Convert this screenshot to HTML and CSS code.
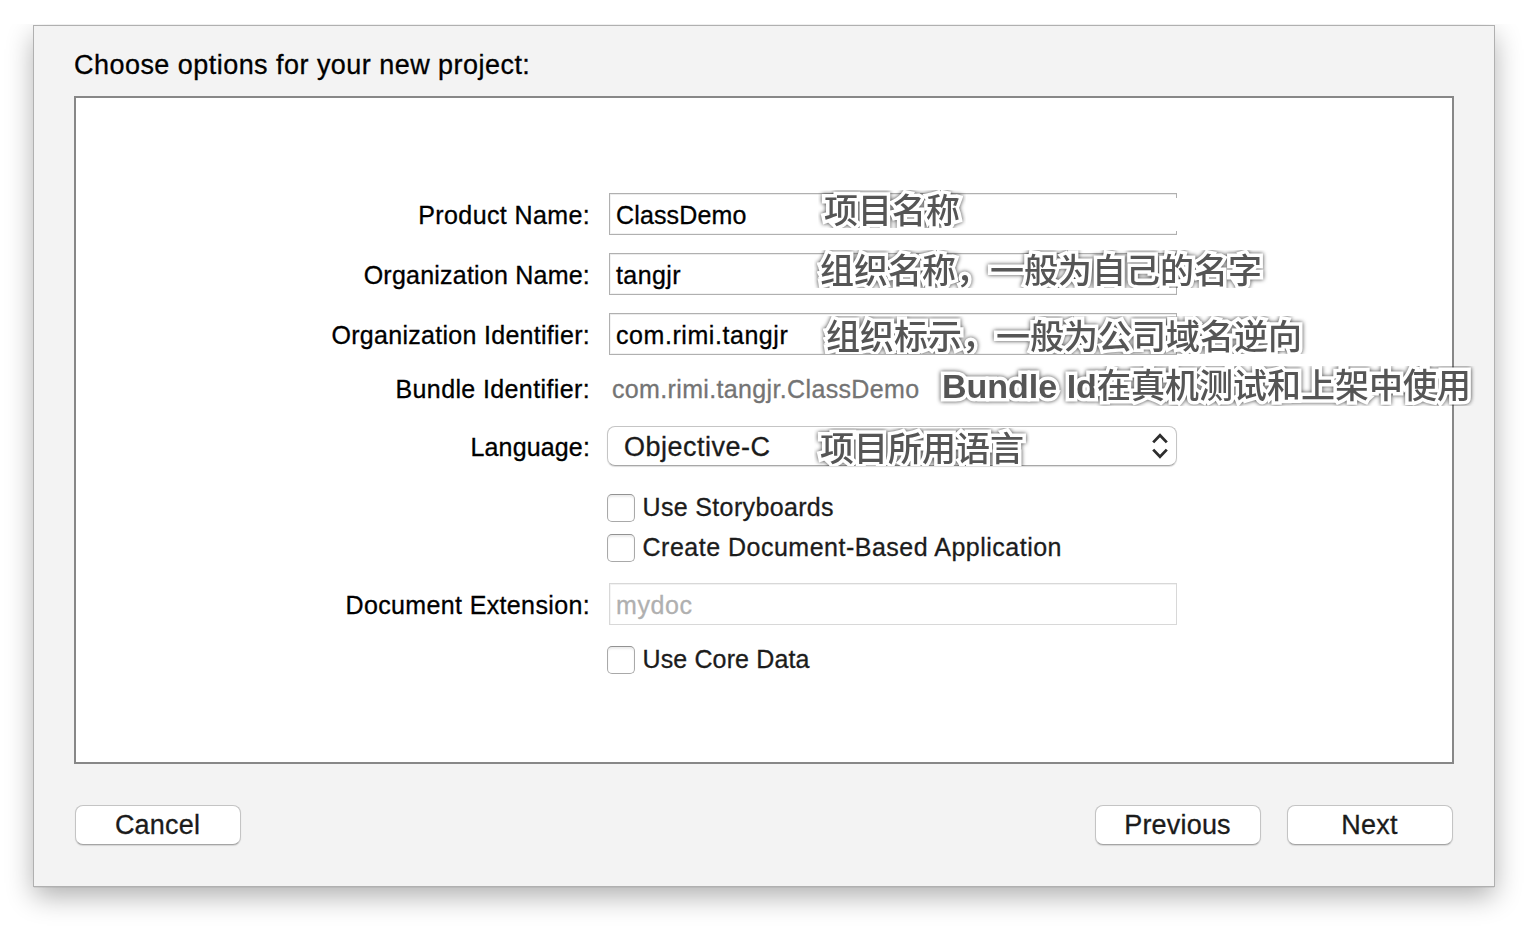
FILE: index.html
```html
<!DOCTYPE html>
<html lang="zh-CN">
<head>
<meta charset="utf-8">
<title>Choose options for your new project</title>
<link rel="stylesheet" href="styles.css">
</head>
<body>
<main class="dialog">
  <h1 class="title">Choose options for your new project:</h1>
  <form class="panel">
    <div class="row">
      <label class="label l-product">Product Name:</label>
      <div class="field field-open"><span class="v-product">ClassDemo</span></div>
    </div>
    <div class="row">
      <label class="label l-orgname">Organization Name:</label>
      <div class="field"><span class="v-org">tangjr</span></div>
    </div>
    <div class="row">
      <label class="label l-orgid">Organization Identifier:</label>
      <div class="field"><span class="v-orgid">com.rimi.tangjr</span></div>
    </div>
    <div class="row row-bundle">
      <label class="label l-bundle">Bundle Identifier:</label>
      <div class="bundle">com.rimi.tangjr.ClassDemo</div>
    </div>
    <div class="row row-language">
      <label class="label l-language">Language:</label>
      <div class="select"><span>Objective-C</span>
        <svg class="chevrons" viewBox="0 0 18 28" width="18" height="28"><path d="M2.2 10.4 9 3.2l6.800 7.200M2.200 17.600 9 24.800l6.800-7.200" fill="none" stroke="#2d2d2d" stroke-width="2.800"/></svg>
      </div>
    </div>
    <div class="row row-story"><span></span><div class="check"><i class="box"></i><span class="c-story">Use Storyboards</span></div></div>
    <div class="row row-document"><span></span><div class="check"><i class="box"></i><span class="c-document">Create Document-Based Application</span></div></div>
    <div class="row row-extension">
      <label class="label l-extension">Document Extension:</label>
      <div class="field field-disabled"><span class="v-extension">mydoc</span></div>
    </div>
    <div class="row row-core"><span></span><div class="check"><i class="box"></i><span class="c-core">Use Core Data</span></div></div>
  </form>
  <footer class="actions">
    <button class="button">Cancel</button>
    <button class="button previous">Previous</button>
    <button class="button">Next</button>
  </footer>
</main>
<div class="note note-product"><span>项目名称</span></div>
<div class="note note-orgname"><span>组织名称，一般为自己的名字</span></div>
<div class="note note-orgid"><span>组织标示，一般为公司域名逆向</span></div>
<div class="note note-bundle"><span><b>Bundle Id</b>在真机测试和上架中使用</span></div>
<div class="note note-language"><span>项目所用语言</span></div>
</body>
</html>
```
FILE: styles.css
```css
* { box-sizing: border-box; }
body { margin: 0; padding: 26px 34px 42px; background: #fff; color: #000; height: 928px; overflow: hidden; position: relative; font-family: "Liberation Sans", Arial, sans-serif; font-size: 25px; }
.dialog { -webkit-text-stroke: .3px; height: 860px; padding: 0 40px 40px; background: #f3f3f3; box-shadow: 0 0 0 1px #b0b0b0, 0 1px 1px #888, 0 10px 26px rgba(0,0,0,.32); clip-path: inset(-2px -34px -42px -34px); display: flex; flex-direction: column; }
.title { margin: 0; height: 70px; padding-top: 23px; font-size: 27px; line-height: 32px; font-weight: 400; white-space: nowrap; letter-spacing: .46px; }
.panel { height: 668px; background: #fff; border: 2px solid #878787; padding-top: 95px; }
.row { display: grid; grid-template-columns: 514px 568px; column-gap: 19px; height: 42px; margin-bottom: 18px; align-items: center; white-space: nowrap; line-height: 30px; }
.label { text-align: right; padding-top: 2px; }
.l-product { letter-spacing: .38px; }
.l-orgname { letter-spacing: .22px; }
.l-orgid { letter-spacing: .29px; }
.l-bundle { letter-spacing: .38px; }
.l-language { letter-spacing: .15px; }
.l-extension { letter-spacing: .36px; }
.v-product { letter-spacing: .15px; }
.v-org { letter-spacing: .4px; }
.v-orgid { letter-spacing: .56px; }
.v-extension { letter-spacing: .6px; }
.c-story { letter-spacing: .35px; }
.c-document { letter-spacing: .5px; }
.c-core { letter-spacing: .13px; }
.field { height: 42px; border: 1px solid #b0b0b0; box-shadow: inset 0 1px 0 #ececec, inset 1px 0 0 #f4f4f4, inset 0 -1px 0 #f2f2f2; padding: 6px 6px 0; color: #000; }
.field-open { position: relative; }
.field-open::after { content: ""; position: absolute; right: -1px; top: 4px; width: 2px; height: 33px; background: #fff; }
.row-bundle { height: 32px; margin: -1px 0 22px; }
.bundle { color: #747474; padding: 2px 0 0 3px; letter-spacing: .35px; }
.row-language { height: 40px; margin-bottom: 28px; }
.select { display: flex; justify-content: space-between; margin-left: -2px; width: 570px; height: 40px; border: 1px solid #c5c5c5; border-bottom-color: #a8a8a8; border-radius: 8px; box-shadow: 0 1px 1px #ddd; padding: 5px 7px 0 16px; font-size: 27px; letter-spacing: .5px; color: #1b1b1b; }
.chevrons { display: block; }
.row-story { height: 28px; margin-bottom: 12px; }
.row-document { height: 28px; margin-bottom: 21px; }
.row-extension { margin-bottom: 21px; }
.row-core { height: 28px; margin: 0; }
.check { margin-left: -2px; height: 28px; line-height: 26px; display: flex; align-items: flex-start; color: #1c1c1c; }
.box { width: 28px; height: 28px; border: 1px solid #a9a9a9; border-top-color: #929292; border-radius: 5px; box-shadow: inset 0 2px 2px #ececec; margin-right: 7.5px; }
.field-disabled { border-color: #d8d8d8; color: #b0b0b0; box-shadow: inset 0 1px 0 #f2f2f2, inset 1px 0 0 #f5f5f5; }
.actions { display: flex; justify-content: space-between; padding: 41px 1px 0; gap: 26px; }
.previous { margin-left: auto; }
.button { width: 166px; height: 40px; border: 1px solid #c4c4c4; border-bottom-color: #a5a5a5; border-radius: 8px; box-shadow: 0 1px 1px #d5d5d5; background: #fff; font: 27px/34px "Liberation Sans", Arial, sans-serif; letter-spacing: .2px; color: #1b1b1b; padding: 0 1px 1px 0; }
.note { position: absolute; height: 38px; overflow: hidden; padding: 4px 6px 0; white-space: nowrap; color: #555; font: 500 34px/34px "Liberation Sans", "Noto Sans CJK SC", sans-serif; }
.note span { display: block; -webkit-text-stroke: 7px #fff; paint-order: stroke fill; stroke-linejoin: round; filter: drop-shadow(0 0 2px rgba(0,0,0,.75)); }
.note-product { left: 818px; top: 190px; }
.note-orgname { left: 814px; top: 250px; }
.note-orgid { left: 820px; top: 316px; }
.note-bundle { left: 936px; top: 366px; height: 40px; padding-top: 3px; }
.note-language { left: 814px; top: 428px; }
```
